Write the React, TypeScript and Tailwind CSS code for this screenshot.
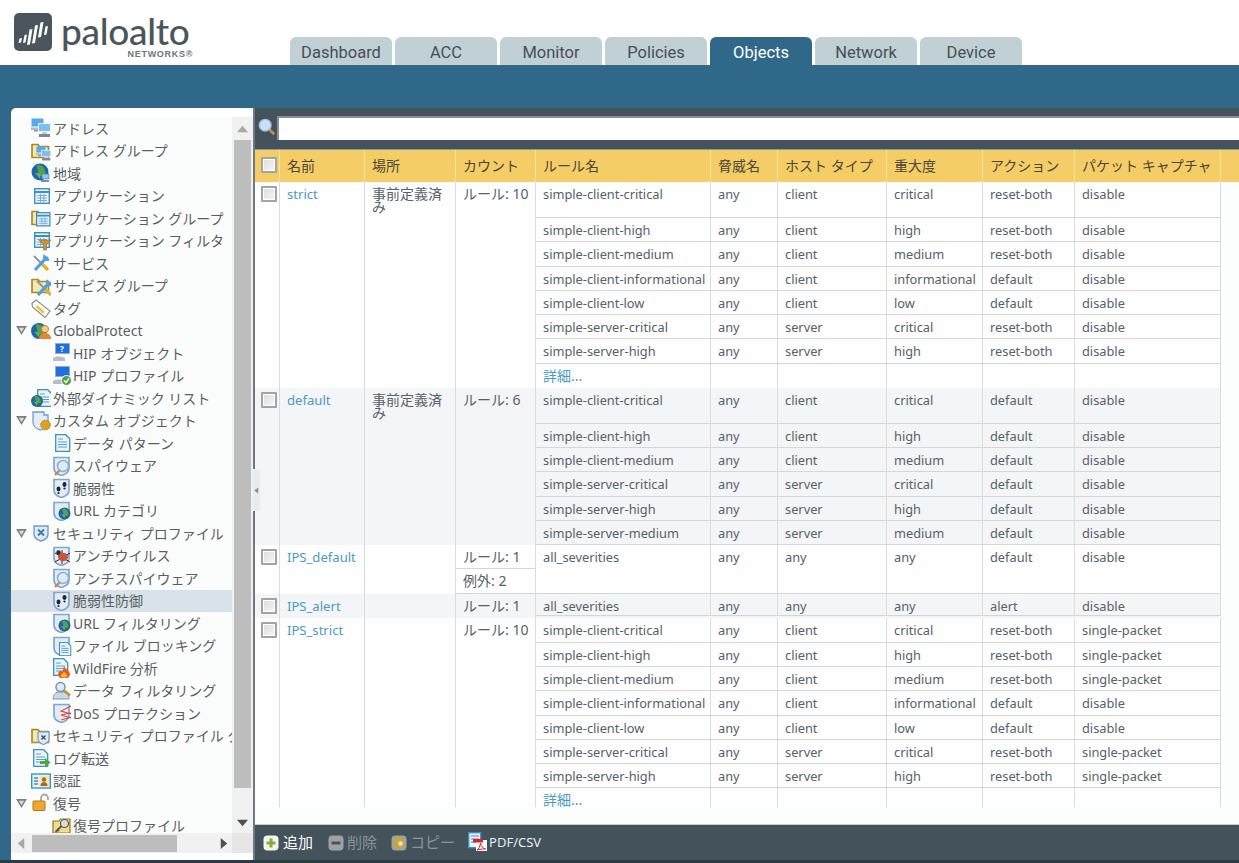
import type { ReactNode } from "react";

const FONT = "font-['Noto_Sans','Noto_Sans_CJK_JP',sans-serif]";

const Folder = () => (
  <g>
    <path d="M1 3.500h6l1.500 2H17.500v11H1z" fill="#f6e8a8" stroke="#a88a2c" strokeWidth="1.7" strokeLinejoin="round" />
  </g>
);

const Net = ({ x = 0, y = 0, s = 1 }: { x?: number; y?: number; s?: number }) => (
  <g transform={`translate(${x} ${y}) scale(${s})`}>
    <rect x="0.5" y="0.5" width="12" height="8" fill="#58a8ec" />
    <path d="M0 9.500h11v2.500H0z" fill="#b4bac4" />
    <path d="M3 12h8v1.500H3z" fill="#8d94a0" />
    <rect x="7.500" y="5.500" width="12" height="8" fill="#7dbdf2" stroke="#fff" strokeWidth="0.8" />
    <path d="M11 14h5v2h-5z" fill="#c4c9d0" />
    <path d="M8 16h11v3H8z" fill="#7e8592" />
  </g>
);

const Globe = ({ cx = 8, cy = 10, r = 7.5 }: { cx?: number; cy?: number; r?: number }) => (
  <g>
    <circle cx={cx} cy={cy} r={r} fill="#1f63a8" />
    <path
      d={`M${cx - r * 0.4} ${cy - r * 0.8}q${r * 0.7} ${-r * 0.1} ${r * 0.9} ${r * 0.4}l${r * 0.2} ${r * 0.7}l${-r * 0.8} ${r * 0.2}z`}
      fill="#52a447"
    />
    <path d={`M${cx - r * 0.6} ${cy + r * 0.1}l${r * 0.7} ${r * 0.1}l${-r * 0.1} ${r * 0.6}z`} fill="#62b456" />
  </g>
);

const Grid = ({ x = 2, y = 2, s = 16 }: { x?: number; y?: number; s?: number }) => (
  <g transform={`translate(${x} ${y}) scale(${s / 16})`}>
    <rect x="0.7" y="0.7" width="14.6" height="14.6" fill="#e8f3fa" stroke="#3f8fc4" strokeWidth="1.4" />
    <path d="M1 4h14" stroke="#3f8fc4" strokeWidth="2" />
    <path d="M3 7.500h10M3 10h10M3 12.500h10M6.500 6v8M10 6v8" stroke="#6aa9d4" strokeWidth="0.9" fill="none" />
  </g>
);

const Doc = ({ x = 3, y = 1, s = 1 }: { x?: number; y?: number; s?: number }) => (
  <g transform={`translate(${x} ${y}) scale(${s})`}>
    <path d="M0.7 0.7h10l4 4v12.600H0.7z" fill="#eaf4fb" stroke="#3f8fc4" strokeWidth="1.3" />
    <path d="M3 5h5M3 8h9M3 10.500h9M3 13h9" stroke="#5a9fd0" strokeWidth="1.2" />
  </g>
);

const Shield = () => (
  <path
    d="M2 1.500h15v10.500c0 4-4 6.500-7.500 7.500C5.500 18.500 2 16 2 12z"
    fill="#e3ecf5"
    stroke="#7fa8d0"
    strokeWidth="1.700"
  />
);

const Magnifier = ({ x = 0, y = 0 }: { x?: number; y?: number }) => (
  <g transform={`translate(${x} ${y})`}>
    <path d="M7 12l-5 5" stroke="#c98a3a" strokeWidth="2.400" />
    <circle cx="10" cy="8" r="5.500" fill="#dcecf8" stroke="#8fb0cc" strokeWidth="1.500" />
  </g>
);

const Wrench = () => (
  <g>
    <path d="M3 3l7 7" stroke="#8b99a5" strokeWidth="2" />
    <path d="M10 10l7 7" stroke="#e4ad2d" strokeWidth="3.200" />
    <path d="M4 17L15 5" stroke="#4f9fdc" strokeWidth="3.200" />
    <path d="M13 2.500a3.600 3.600 0 0 0 4.500 4.500l-1-2.500-1 .5-.5-1z" fill="#4f9fdc" stroke="#4f9fdc" strokeWidth="1.500" />
  </g>
);

const Monitor = () => (
  <g>
    <rect x="3.500" y="0.5" width="14" height="10" fill="#1e6fe0" stroke="#9ab" strokeWidth="0.8" />
    <path d="M1 15c2-2 9-2 12 0v3H1z" fill="#b8bec8" />
  </g>
);

const ICONS: Record<string, ReactNode> = {
  net: <Net />,
  netgroup: (
    <>
      <Folder />
      <Net x={5} y={5} s={0.76} />
    </>
  ),
  globe: (
    <>
      <Globe cx={9} cy={9} r={8.500} />
      <rect x="11" y="11" width="7" height="5" fill="#8cc6f2" stroke="#3c7db5" strokeWidth="0.6" />
      <path d="M10 17h8v2h-8z" fill="#868d99" />
    </>
  ),
  grid: <Grid x={3} y={2} />,
  gridgroup: (
    <>
      <Folder />
      <Grid x={5} y={4} s={14.500} />
    </>
  ),
  gridfilter: (
    <>
      <Grid x={3} y={1} />
      <path d="M8 9h12l-4.500 5v5h-3v-5z" fill="#c9953c" stroke="#8d6a25" strokeWidth="0.6" />
    </>
  ),
  tools: <Wrench />,
  toolsgroup: (
    <>
      <Folder />
      <g transform="translate(3 2)">
        <Wrench />
      </g>
    </>
  ),
  tag: (
    <>
      <path d="M1 5.500l4-3.500 14 11-5 6.500L1.500 9z" fill="#fff" stroke="#8a8f94" strokeWidth="1.200" />
      <path d="M6 7l8 6.500-2 2.500-7-6.500z" fill="#f6c343" />
    </>
  ),
  gp: (
    <>
      <Globe cx={8} cy={10} r={8} />
      <circle cx="14" cy="8" r="3.600" fill="#f5c99a" stroke="#b8732c" strokeWidth="0.8" />
      <path d="M8 18c0-4 3-6 6-6s6 2 6 6z" fill="#e8842c" />
    </>
  ),
  hipobj: (
    <>
      <Monitor />
      <text x="8" y="9" fontSize="8" fill="#fff" fontWeight="700">
        ?
      </text>
    </>
  ),
  hipprof: (
    <>
      <Monitor />
      <circle cx="14.500" cy="14.500" r="5" fill="#4da24a" stroke="#fff" strokeWidth="1" />
      <path d="M12 14.500l2 2 3-4" stroke="#fff" strokeWidth="1.400" fill="none" />
    </>
  ),
  edl: (
    <>
      <Doc x={6} y={1} />
      <Globe cx={6} cy={13} r={6} />
    </>
  ),
  custom: (
    <>
      <path d="M2 1h11v3h4v7c0 4-4 7-7.500 8C5.500 18 2 15 2 11z" fill="#e4edf6" stroke="#6f9cc8" strokeWidth="1.300" />
      <circle cx="14.500" cy="14" r="4.800" fill="#e0a020" stroke="#a86f10" strokeWidth="1" strokeDasharray="1.500 1" />
    </>
  ),
  doc: <Doc x={3} y={1} />,
  spy: (
    <>
      <Shield />
      <Magnifier x={1} y={2} />
    </>
  ),
  vuln: (
    <>
      <Shield />
      <ellipse cx="6.500" cy="11" rx="2" ry="2.400" fill="#1d2730" />
      <ellipse cx="12.500" cy="6.500" rx="2" ry="2.400" fill="#1d2730" />
      <circle cx="6.500" cy="15" r="1.100" fill="#1d2730" />
      <circle cx="12.500" cy="10.500" r="1.100" fill="#1d2730" />
    </>
  ),
  url: (
    <>
      <Shield />
      <Globe cx={12.500} cy={12.500} r={6} />
    </>
  ),
  sec: (
    <g transform="translate(1 0)">
      <path d="M2 3h14v8c0 3.500-3.500 6-7 7-3.500-1-7-3.500-7-7z" fill="#dfeaf5" stroke="#6f9cc8" strokeWidth="1.400" />
      <path d="M6 6.500l6 6M12 6.500l-6 6" stroke="#3a78b0" strokeWidth="1.800" />
    </g>
  ),
  bug: (
    <>
      <Shield />
      <path d="M3 7l15 9M3 16l15-9M10 4v14" stroke="#2a2a2a" strokeWidth="1" />
      <ellipse cx="11" cy="11" rx="5" ry="4.200" fill="#c9553c" />
      <circle cx="6.500" cy="6.500" r="2.200" fill="#2a2a2a" />
    </>
  ),
  fileblock: (
    <>
      <Shield />
      <Doc x={7} y={6} s={0.8} />
    </>
  ),
  wildfire: (
    <>
      <Doc x={1} y={0} />
      <path d="M12 8c1 3 6 5 6 8a5 4 0 0 1-12 0c0-2 2-3 3-4 0 2 1 2 1.500 1 .5-1 1-3 1.500-5z" fill="#ea5a1e" />
      <path d="M12 14c1 1 3 2 3 3.500a3 2 0 0 1-6 0c0-1 2-2 3-3.500z" fill="#f7b733" />
    </>
  ),
  datafilter: (
    <>
      <path d="M1 18c0-4 2-6 5-7h8c2 1 3 3 3 7z" fill="#c8d6e5" stroke="#7f9ab5" strokeWidth="1" />
      <circle cx="8.500" cy="6" r="4.500" fill="#dcecf8" stroke="#7d93a8" strokeWidth="1.500" />
      <path d="M12 9.500l6 5" stroke="#c98a3a" strokeWidth="2.400" />
    </>
  ),
  dos: (
    <>
      <Shield />
      <path d="M19 3L9 8l10 3M19 10L9 12l10 3M9 17l10-3" stroke="#dc4a36" strokeWidth="1.100" fill="none" />
    </>
  ),
  secgroup: (
    <>
      <Folder />
      <path d="M7 6h11v7c0 2.500-2.500 4.500-5.500 5.500C9.500 17.500 7 15.500 7 13z" fill="#dfeaf5" stroke="#6f9cc8" strokeWidth="1.200" />
      <path d="M10.500 9.500l4 4M14.500 9.500l-4 4" stroke="#34506e" strokeWidth="1.400" />
    </>
  ),
  logfwd: (
    <>
      <Doc x={2} y={1} />
      <path d="M9 13h5v-3l5.500 4.500-5.500 4.500v-3H9z" fill="#4fa83e" />
    </>
  ),
  auth: (
    <>
      <rect x="0.7" y="3" width="18.600" height="14" fill="#e8f3fa" stroke="#3f8fc4" strokeWidth="1.400" />
      <path d="M3 7h4M3 10h4M3 13h4" stroke="#3f8fc4" strokeWidth="1.400" />
      <rect x="8.500" y="4.500" width="9.500" height="11" fill="#f4e6b0" />
      <circle cx="13" cy="8.500" r="2.200" fill="#a36a2e" />
      <path d="M9.500 15c0-3 2-4 3.500-4s3.500 1 3.500 4z" fill="#a36a2e" />
    </>
  ),
  lock: (
    <>
      <path d="M10 8V5a3.500 3.500 0 0 1 7 0v2" stroke="#a8a8a8" strokeWidth="1.800" fill="none" />
      <rect x="2" y="8" width="12" height="9.500" rx="1" fill="#eda92f" stroke="#b87914" strokeWidth="1" />
    </>
  ),
  key: (
    <>
      <path d="M1 5h6l1.500-2H18v14H1z" fill="#f1dc8c" stroke="#8f7624" strokeWidth="1.200" />
      <circle cx="12.500" cy="7.500" r="4" fill="#dcdcdc" stroke="#555" strokeWidth="1.200" />
      <path d="M9.500 10l-6 6M5 13l2 2" stroke="#555" strokeWidth="1.800" />
    </>
  ),
};

const Icon = ({ name }: { name: string }) => (
  <svg viewBox="0 0 20 20" className="w-5 h-5 shrink-0">
    {ICONS[name]}
  </svg>
);

type TreeItem = { label: string; icon: string; level: 1 | 2; open?: boolean; selected?: boolean };

const TREE: TreeItem[] = [
  { label: "アドレス", icon: "net", level: 1 },
  { label: "アドレス グループ", icon: "netgroup", level: 1 },
  { label: "地域", icon: "globe", level: 1 },
  { label: "アプリケーション", icon: "grid", level: 1 },
  { label: "アプリケーション グループ", icon: "gridgroup", level: 1 },
  { label: "アプリケーション フィルタ", icon: "gridfilter", level: 1 },
  { label: "サービス", icon: "tools", level: 1 },
  { label: "サービス グループ", icon: "toolsgroup", level: 1 },
  { label: "タグ", icon: "tag", level: 1 },
  { label: "GlobalProtect", icon: "gp", level: 1, open: true },
  { label: "HIP オブジェクト", icon: "hipobj", level: 2 },
  { label: "HIP プロファイル", icon: "hipprof", level: 2 },
  { label: "外部ダイナミック リスト", icon: "edl", level: 1 },
  { label: "カスタム オブジェクト", icon: "custom", level: 1, open: true },
  { label: "データ パターン", icon: "doc", level: 2 },
  { label: "スパイウェア", icon: "spy", level: 2 },
  { label: "脆弱性", icon: "vuln", level: 2 },
  { label: "URL カテゴリ", icon: "url", level: 2 },
  { label: "セキュリティ プロファイル", icon: "sec", level: 1, open: true },
  { label: "アンチウイルス", icon: "bug", level: 2 },
  { label: "アンチスパイウェア", icon: "spy", level: 2 },
  { label: "脆弱性防御", icon: "vuln", level: 2, selected: true },
  { label: "URL フィルタリング", icon: "url", level: 2 },
  { label: "ファイル ブロッキング", icon: "fileblock", level: 2 },
  { label: "WildFire 分析", icon: "wildfire", level: 2 },
  { label: "データ フィルタリング", icon: "datafilter", level: 2 },
  { label: "DoS プロテクション", icon: "dos", level: 2 },
  { label: "セキュリティ プロファイル グループ", icon: "secgroup", level: 1 },
  { label: "ログ転送", icon: "logfwd", level: 1 },
  { label: "認証", icon: "auth", level: 1 },
  { label: "復号", icon: "lock", level: 1, open: true },
  { label: "復号プロファイル", icon: "key", level: 2 },
];

const TABS = ["Dashboard", "ACC", "Monitor", "Policies", "Objects", "Network", "Device"];

const HEADERS = [
  { label: "", w: "w-[25px]" },
  { label: "名前", w: "w-[85px]" },
  { label: "場所", w: "w-[91px]" },
  { label: "カウント", w: "w-[80px]" },
  { label: "ルール名", w: "w-[175px]" },
  { label: "脅威名", w: "w-[67px]" },
  { label: "ホスト タイプ", w: "w-[109px]" },
  { label: "重大度", w: "w-[96px]" },
  { label: "アクション", w: "w-[92px]" },
  { label: "パケット キャプチャ", w: "w-[146px]" },
];

type Rule = { name: string; host: string; sev: string; action: string; cap: string };

const r = (name: string, host: string, sev: string, action: string, cap: string): Rule => ({
  name,
  host,
  sev,
  action,
  cap,
});

type Group = {
  name: string;
  location?: string;
  counts: string[];
  rules: Rule[];
  more?: boolean;
  shaded?: boolean;
  heights: number[];
  countHeights?: number[];
};

const GROUPS: Group[] = [
  {
    name: "strict",
    location: "事前定義済み",
    counts: ["ルール: 10"],
    heights: [36, 24.3, 24.3, 24.3, 24.3, 24.3, 24.3, 24.2],
    more: true,
    rules: [
      r("simple-client-critical", "client", "critical", "reset-both", "disable"),
      r("simple-client-high", "client", "high", "reset-both", "disable"),
      r("simple-client-medium", "client", "medium", "reset-both", "disable"),
      r("simple-client-informational", "client", "informational", "default", "disable"),
      r("simple-client-low", "client", "low", "default", "disable"),
      r("simple-server-critical", "server", "critical", "reset-both", "disable"),
      r("simple-server-high", "server", "high", "reset-both", "disable"),
    ],
  },
  {
    name: "default",
    location: "事前定義済み",
    counts: ["ルール: 6"],
    shaded: true,
    heights: [36, 24.2, 24.2, 24.2, 24.2, 24.2],
    rules: [
      r("simple-client-critical", "client", "critical", "default", "disable"),
      r("simple-client-high", "client", "high", "default", "disable"),
      r("simple-client-medium", "client", "medium", "default", "disable"),
      r("simple-server-critical", "server", "critical", "default", "disable"),
      r("simple-server-high", "server", "high", "default", "disable"),
      r("simple-server-medium", "server", "medium", "default", "disable"),
    ],
  },
  {
    name: "IPS_default",
    counts: ["ルール: 1", "例外: 2"],
    countHeights: [24, 25],
    heights: [49],
    rules: [r("all_severities", "any", "any", "default", "disable")],
  },
  {
    name: "IPS_alert",
    counts: ["ルール: 1"],
    shaded: true,
    heights: [22],
    rules: [r("all_severities", "any", "any", "alert", "disable")],
  },
  {
    name: "IPS_strict",
    counts: ["ルール: 10"],
    heights: [24.8, 24.3, 24.3, 24.3, 24.3, 24.3, 24.3, 19],
    more: true,
    rules: [
      r("simple-client-critical", "client", "critical", "reset-both", "single-packet"),
      r("simple-client-high", "client", "high", "reset-both", "single-packet"),
      r("simple-client-medium", "client", "medium", "reset-both", "single-packet"),
      r("simple-client-informational", "client", "informational", "default", "disable"),
      r("simple-client-low", "client", "low", "default", "disable"),
      r("simple-server-critical", "server", "critical", "reset-both", "single-packet"),
      r("simple-server-high", "server", "high", "reset-both", "single-packet"),
    ],
  },
];

const Checkbox = () => (
  <div className="w-4 h-4 shrink-0 border-2 border-[#a3a3a3] bg-gradient-to-br from-[#dcdcdc] to-[#f6f6f6] rounded-[1px] shadow-[inset_0_0_0_1px_#fff]" />
);

const Triangle = ({ points, className }: { points: string; className: string }) => (
  <svg viewBox="0 0 12 12" className={className}>
    <polygon points={points} fill="currentColor" />
  </svg>
);

const TreeRow = ({ item }: { item: TreeItem }) => (
  <div
    className={`flex items-center h-[22.5px] shrink-0 whitespace-nowrap ${item.selected ? "bg-[#d8e2e8]" : ""} ${
      item.level === 2 ? "pl-[41px]" : "pl-[5px]"
    }`}
  >
    {item.level === 1 && (
      <span className="w-[15px] shrink-0">
        {item.open && (
          <svg viewBox="0 0 12 10" className="w-[11px] h-[9px]">
            <polygon points="0,0 12,0 6,10" fill="#7b7f82" />
            <polygon points="3,2 9,2 6,7" fill="#d9dcde" />
          </svg>
        )}
      </span>
    )}
    <Icon name={item.icon} />
    <span className={`text-[14px] text-[#5a5f63] ${item.level === 2 ? "ml-[1px]" : "ml-[2px]"}`}>{item.label}</span>
  </div>
);

const Sidebar = () => (
  <aside className="w-[242px] shrink-0 flex flex-col bg-white rounded-tl-[5px]">
    <div className="h-[9px] shrink-0" />
    <div className="flex h-[716px] shrink-0">
      <div className="w-[221px] overflow-hidden flex flex-col bg-[#fbfdfd]">
        {TREE.map((item) => (
          <TreeRow key={item.label + item.icon} item={item} />
        ))}
      </div>
      <div className="w-[21px] bg-[#f1f1f1] flex flex-col items-center">
        <div className="h-[23px] flex items-center justify-center text-[#a8a8a8]">
          <Triangle points="0,10 12,10 6,3" className="w-[11px] h-[11px]" />
        </div>
        <div className="w-[17px] h-[648px] bg-[#bdbdbd]" />
        <div className="flex-1 flex items-end justify-center pb-[4px] text-[#505050]">
          <Triangle points="0,2 12,2 6,9" className="w-[11px] h-[11px]" />
        </div>
      </div>
    </div>
    <div className="flex h-[20px] shrink-0 bg-[#f1f1f1] items-center">
      <div className="w-[21px] flex justify-center text-[#a8a8a8]">
        <Triangle points="9,0 9,12 2,6" className="w-[11px] h-[11px]" />
      </div>
      <div className="w-[145px] h-[17px] bg-[#bdbdbd]" />
      <div className="w-[55px] flex justify-end pr-[3px] text-[#505050]">
        <Triangle points="3,0 3,12 10,6" className="w-[11px] h-[11px]" />
      </div>
      <div className="w-[21px] h-full bg-[#e6e6e6]" />
    </div>
    <div className="flex-1" />
  </aside>
);

const Cell = ({ w, children, link }: { w: string; children?: ReactNode; link?: boolean }) => (
  <div
    className={`${w} shrink-0 px-[7px] leading-[24px] border-r border-[#dcdcdc] whitespace-nowrap overflow-hidden ${
      link ? "text-[#4d9ac4]" : ""
    }`}
  >
    {children}
  </div>
);

const RuleRows = ({ group }: { group: Group }) => (
  <div className="flex flex-col shrink-0 text-[12.8px]">
    {group.rules.map((rule, i) => (
      <div
        key={rule.name}
        style={{ height: group.heights[i] }}
        className={`flex ${i < group.heights.length - 1 || !group.more ? "border-b border-[#d6d6d6]" : ""}`}
      >
        <Cell w="w-[175px]">{rule.name}</Cell>
        <Cell w="w-[67px]">any</Cell>
        <Cell w="w-[109px]">{rule.host}</Cell>
        <Cell w="w-[96px]">{rule.sev}</Cell>
        <Cell w="w-[92px]">{rule.action}</Cell>
        <Cell w="w-[146px]">{rule.cap}</Cell>
      </div>
    ))}
    {group.more && (
      <div style={{ height: group.heights[group.heights.length - 1] }} className="flex overflow-hidden">
        <Cell w="w-[175px]" link>
          <span className="block pt-[4px] text-[14px] leading-[15px]">詳細...</span>
        </Cell>
        <Cell w="w-[67px]" />
        <Cell w="w-[109px]" />
        <Cell w="w-[96px]" />
        <Cell w="w-[92px]" />
        <Cell w="w-[146px]" />
      </div>
    )}
  </div>
);

const GroupRow = ({ group }: { group: Group }) => (
  <div className={`flex w-[966px] ${group.shaded ? "bg-[#f3f5f6]" : "bg-[#fefefe]"}`}>
    <div className="w-[25px] shrink-0 pt-[4px] pl-[6px] border-r border-[#dcdcdc]">
      <Checkbox />
    </div>
    <div className="w-[85px] shrink-0 px-[7px] leading-[24px] text-[13.1px] text-[#4d9ac4] border-r border-[#dcdcdc] whitespace-nowrap">
      {group.name}
    </div>
    <div className="w-[91px] shrink-0 px-[7px] pt-[5px] leading-[13px] border-r border-[#dcdcdc]">
      {group.location}
    </div>
    <div className="w-[80px] shrink-0 flex flex-col border-r border-[#dcdcdc]">
      {group.counts.map((c, i) => (
        <div
          key={c}
          style={group.countHeights ? { height: group.countHeights[i] } : undefined}
          className={`px-[7px] leading-[24px] whitespace-nowrap ${
            group.countHeights ? "border-b border-[#d6d6d6]" : ""
          }`}
        >
          {c}
        </div>
      ))}
    </div>
    <RuleRows group={group} />
  </div>
);

const Table = () => (
  <div className="flex-1 bg-[#fcfefe] flex flex-col overflow-hidden border-t border-[#8d969c] border-b border-b-[#c9ced1]">
    <div className="flex h-[32px] shrink-0 bg-[#f4cd67] text-[#4a4638]">
      {HEADERS.map((h, i) => (
        <div
          key={h.w + i}
          className={`${h.w} shrink-0 h-full flex items-center pb-[2px] whitespace-nowrap border-r border-[#fae3a6] ${
            i === 0 ? "pl-[6px]" : "px-[7px]"
          }`}
        >
          {i === 0 ? <Checkbox /> : h.label}
        </div>
      ))}
    </div>
    <div className="flex flex-col text-[#56616a]">
      {GROUPS.map((g) => (
        <GroupRow key={g.name} group={g} />
      ))}
    </div>
  </div>
);

const Toolbar = () => (
  <div className="h-[35px] shrink-0 flex items-center pl-[8px] bg-[#44525c] text-[15px]">
    <svg viewBox="0 0 16 16" className="w-4 h-4 shrink-0">
      <rect x="0.5" y="0.5" width="15" height="15" rx="4" fill="#f3f5ee" />
      <path d="M8 3.500v9M3.500 8h9" stroke="#8cab3c" strokeWidth="3" />
    </svg>
    <span className="ml-[4px] text-white">追加</span>
    <svg viewBox="0 0 16 16" className="w-4 h-4 shrink-0 ml-[15px]">
      <rect x="0.5" y="0.5" width="15" height="15" rx="4" fill="#9aa3a8" />
      <path d="M3.500 8h9" stroke="#5c4f48" strokeWidth="3" />
    </svg>
    <span className="ml-[3px] text-[#8b949a]">削除</span>
    <svg viewBox="0 0 16 16" className="w-4 h-4 shrink-0 ml-[14px]">
      <rect x="0.5" y="0.5" width="15" height="15" rx="4" fill="#9aa3a8" />
      <circle cx="8" cy="8" r="6" fill="#c5a63f" />
      <circle cx="9.500" cy="8.500" r="2.200" fill="#e9e3c8" />
    </svg>
    <span className="ml-[3px] text-[#8b949a]">コピー</span>
    <svg viewBox="0 0 20 20" className="w-5 h-5 shrink-0 ml-[13px] -mt-[2px]">
      <rect x="0.7" y="0.7" width="12" height="15" fill="#e8f3fa" stroke="#3f8fc4" strokeWidth="1.400" />
      <path d="M3 4h8M3 7h8M3 10h8" stroke="#3f8fc4" strokeWidth="1.200" />
      <path d="M8 8h11v11H8z" fill="#fff" />
      <path d="M5 7h10v3.500H5z" fill="#d8242a" />
      <path d="M9 18c2-1 3-4 3.500-7 .5 3 2 5 5 6-3 0-6 0-8.500 1z" fill="none" stroke="#d8242a" strokeWidth="1" />
    </svg>
    <span className="ml-[1px] text-[13px] text-[#e8eef2]">PDF/CSV</span>
  </div>
);

const Logo = () => (
  <div className="flex shrink-0 w-[290px] pl-[14px] pt-[13px] items-start">
    <svg viewBox="0 0 38 38" className="w-[38px] h-[38px] shrink-0">
      <rect width="38" height="38" rx="5" fill="#4a555c" />
      <path
        d="M5.500 25.500l2.500-.5-1 4.500-2.500.5zM10.500 22l2.500-.5-1.500 8-2.500.5zM15.500 16.500l3-.5-2.500 15.500-3 .5zM21 12.500l3-.5-3 18-3 .5zM26.500 9.500l3-.5-2.500 15-3 .5zM31.500 13.500l2.500-.5-1.500 8.500-2.500.5z"
        fill="#fff"
      />
    </svg>
    <div className="ml-[9px] flex flex-col w-[132px]">
      <span className="self-start font-['Lato',sans-serif] font-medium text-[37px] leading-[36px] text-[#4a555c] -tracking-[0.3px]">
        paloalto
      </span>
      <span className="self-end font-['Liberation_Sans',sans-serif] font-bold text-[9px] leading-[10px] tracking-[0.7px] text-[#6d767c]">
        NETWORKS®
      </span>
    </div>
  </div>
);

export default function App() {
  return (
    <div className={`w-[1239px] h-[863px] overflow-hidden flex flex-col bg-white ${FONT} text-[14px]`}>
      <header className="h-[65px] shrink-0 flex">
        <Logo />
        <nav className="flex items-end gap-[3px]">
          {TABS.map((t) => (
            <div
              key={t}
              className={`w-[102px] h-[28px] pt-[4px] rounded-t-[6px] flex items-center justify-center font-['Roboto',sans-serif] text-[16.5px] ${
                t === "Objects" ? "bg-[#30688a] text-white" : "bg-[#c0d0d5] text-[#484f55]"
              }`}
            >
              {t}
            </div>
          ))}
        </nav>
      </header>
      <div className="h-[43px] shrink-0 bg-[#30688a]" />
      <div className="flex-1 min-h-0 flex bg-[#30688a] pl-[11px]">
        <Sidebar />
        <main className="relative flex-1 min-w-0 flex flex-col bg-[#44525c] border-l-2 border-[#6e7a82]">
          <div className="h-[41px] shrink-0 flex items-start pl-[3px] pt-[8px]">
            <svg viewBox="0 0 20 20" className="w-[18px] h-[18px] shrink-0 mt-[2px]">
              <path d="M13 13l5 5" stroke="#c98a3a" strokeWidth="3" />
              <circle cx="8" cy="8" r="6.500" fill="#c8e0f5" stroke="#9fc0dc" strokeWidth="1.500" />
            </svg>
            <div className="ml-[1px] flex-1 h-[24px] bg-white border-t-2 border-l-2 border-[#8a8f93]" />
          </div>
          <Table />
          <Toolbar />
          <div className="absolute left-[-2px] top-[361px] w-[7px] h-[42px] bg-[#e9ecee] rounded-r-[3px] flex items-center justify-center text-[#8b9296]">
            <Triangle points="9,1 9,11 2,6" className="w-[7px] h-[7px]" />
          </div>
        </main>
      </div>
      <div className="h-[3px] shrink-0 bg-[#2c3a42]" />
    </div>
  );
}
